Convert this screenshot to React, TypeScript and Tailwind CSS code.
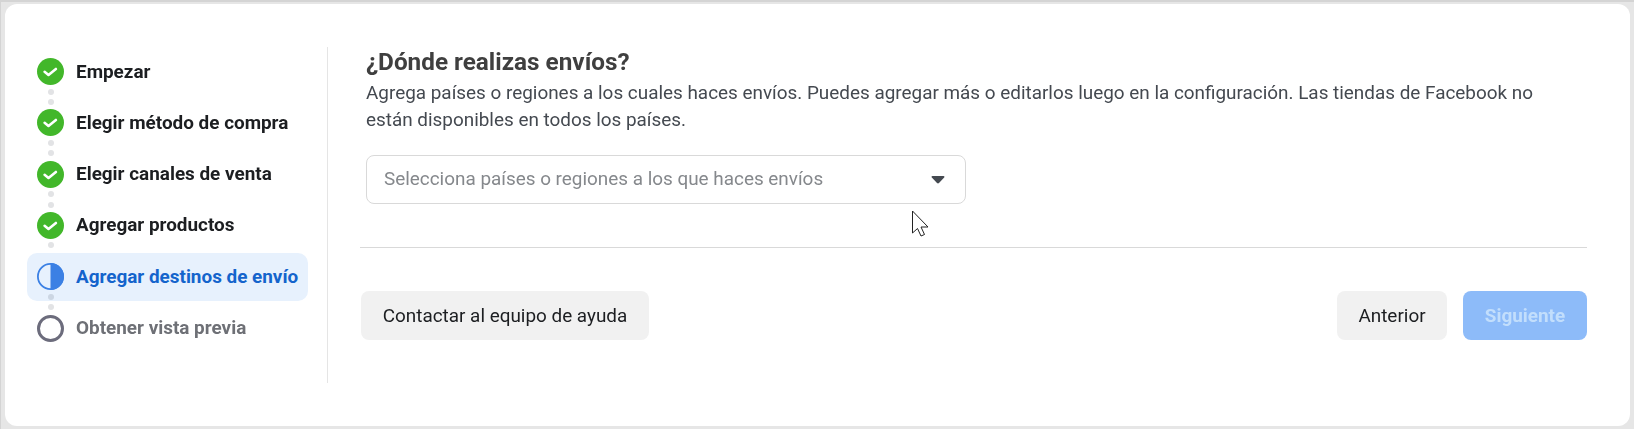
const STEPS = [
  { label: "Empezar", state: "done" },
  { label: "Elegir método de compra", state: "done" },
  { label: "Elegir canales de venta", state: "done" },
  { label: "Agregar productos", state: "done" },
  { label: "Agregar destinos de envío", state: "active" },
  { label: "Obtener vista previa", state: "todo" },
];

function StepIcon({ state }: { state: string }) {
  if (state === "done") {
    return (
      <svg width="27" height="27" viewBox="0 0 27 27" className="relative shrink-0">
        <circle cx="13.5" cy="13.5" r="13.5" fill="#42b72a" />
        <path d="M7.6 13.8l3.9 3.1 7.4-5.9" fill="none" stroke="#fff" strokeWidth="2.6" strokeLinecap="round" strokeLinejoin="round" />
      </svg>
    );
  }
  if (state === "active") {
    return (
      <svg width="27" height="27" viewBox="0 0 27 27" className="relative shrink-0">
        <circle cx="13.5" cy="13.5" r="12.6" fill="#fff" fillOpacity="0" stroke="#3b80e4" strokeWidth="1.8" />
        <path d="M13.5 0a13.5 13.5 0 0 1 0 27z" fill="#3b80e4" />
      </svg>
    );
  }
  return (
    <svg width="27" height="27" viewBox="0 0 27 27" className="relative shrink-0">
      <circle cx="13.5" cy="13.5" r="12" fill="none" stroke="#6c6c7c" strokeWidth="3" />
    </svg>
  );
}

function StepRow({ label, state, last }: { label: string; state: string; last: boolean }) {
  return (
    <div
      className={
        "relative flex h-12 items-center gap-[12px] rounded-[10px] pl-[10px] " +
        (state === "active" ? "bg-[#e7f1fd]" : "")
      }
    >
      {!last && (
        <>
          <span className="absolute left-[21px] top-[41px] h-[6px] w-[6px] rounded-full bg-[#e2e3e5] mix-blend-multiply" />
          <span className="absolute left-[21px] top-[51.5px] h-[6px] w-[6px] rounded-full bg-[#e2e3e5] mix-blend-multiply" />
        </>
      )}
      <StepIcon state={state} />
      <span
        className={
          "text-[18.9px] font-bold leading-5 " +
          (state === "active" ? "text-[#1464cc]" : state === "todo" ? "text-[#6e7076]" : "text-[#1c1e21]")
        }
      >
        {label}
      </span>
    </div>
  );
}

export default function App() {
  return (
    <div className="h-[429px] w-[1634px] overflow-hidden border-l border-t-2 border-[#d4d4d4] bg-[#e6e6e6] pb-[3px] pl-[4px] pr-[4px] pt-[2px] font-['Roboto',sans-serif]">
      <div className="relative flex h-full rounded-[12px] bg-white pl-[22px] pt-[43px]">
        <aside className="flex h-[336px] w-[301px] shrink-0 flex-col gap-[3.33px] border-r border-[#e5e5e5] pr-[19px] pt-[0.5px]">
          {STEPS.map((s, i) => (
            <StepRow key={s.label} label={s.label} state={s.state} last={i === STEPS.length - 1} />
          ))}
        </aside>

        <main className="ml-[38px] flex w-[1227px] flex-col">
          <h1 className="text-[24.3px] font-bold leading-[30px] text-[#3f3f3f]">¿Dónde realizas envíos?</h1>
          <p className="mt-[2px] w-[1190px] text-[18.9px] leading-[27px] text-[#444950]">
            Agrega países o regiones a los cuales haces envíos. Puedes agregar más o editarlos luego en la
            configuración. Las tiendas de Facebook no están disponibles en todos los países.
          </p>
          <button className="mt-[22px] flex h-[49px] w-[600px] items-center justify-between rounded-[8px] border border-[#d9d9d9] pl-[17px] pr-[20px] text-[18.9px] text-[#85888c]">
            <span>Selecciona países o regiones a los que haces envíos</span>
            <svg width="14" height="9" viewBox="0 0 14 9">
              <path d="M1.5 1h11c.9 0 1.3 1 .7 1.6L8 8c-.6.6-1.4.6-2 0L.8 2.6C.2 2 .6 1 1.5 1z" fill="#444950" />
            </svg>
          </button>
        </main>

        <div className="absolute left-[355px] right-[43px] top-[243px] border-t border-[#d9d9d9]" />

        <div className="absolute left-[356px] right-[43px] top-[287px] flex items-center text-[18.9px] text-[#1c1e21]">
          <button className="h-[49px] w-[288px] rounded-[8px] bg-[#f1f1f1] pt-[1px]">Contactar al equipo de ayuda</button>
          <button className="ml-auto h-[49px] w-[110px] rounded-[8px] bg-[#f1f1f1] pt-[1px]">Anterior</button>
          <button className="ml-[16px] h-[49px] w-[124px] rounded-[8px] bg-[#8dbbf9] pt-[1px] font-bold text-[#c2defc]">Siguiente</button>
        </div>

        <svg className="absolute left-[906px] top-[206px]" width="20" height="29" viewBox="0 0 20 29">
          <path d="M1.5 1v22l5-4.5 3.5 7.5 3.5-1.5-3.5-7.5h7z" fill="#fff" stroke="#222" strokeWidth="1" />
        </svg>
      </div>
    </div>
  );
}
